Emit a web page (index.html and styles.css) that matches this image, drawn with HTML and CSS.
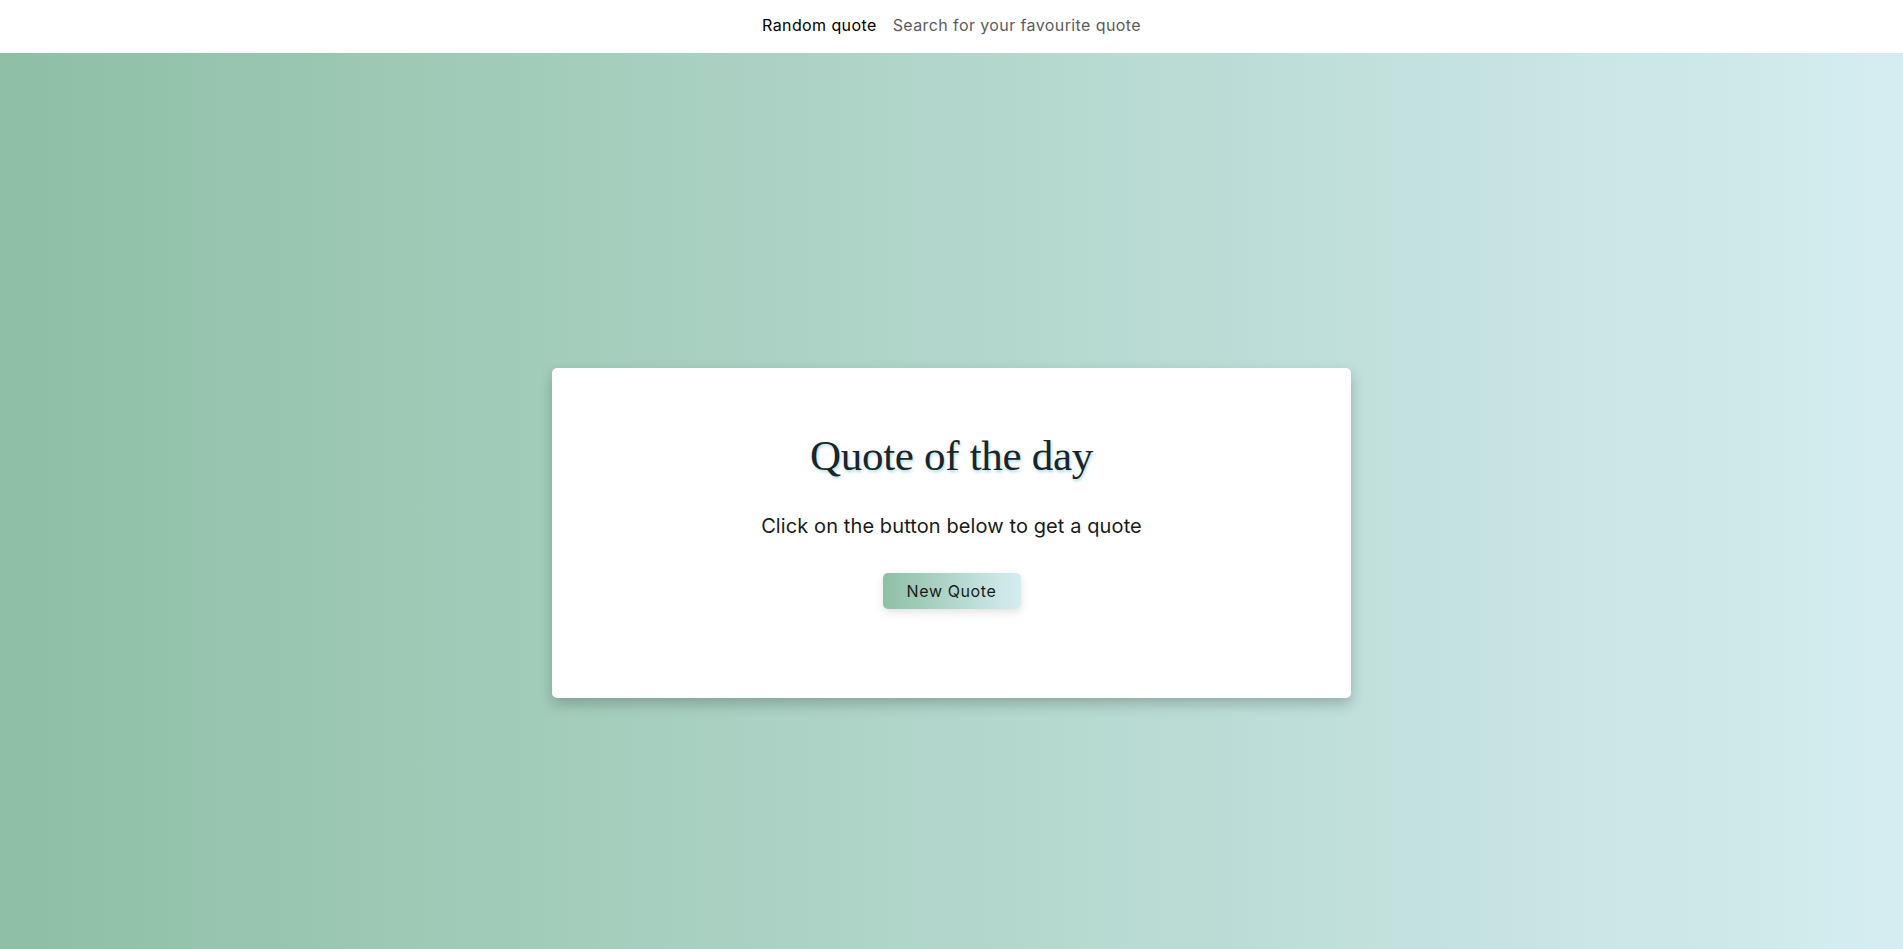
FILE: index.html
```html
<!DOCTYPE html>
<html lang="en">
<head>
<meta charset="utf-8">
<title>Random quote</title>
<link rel="stylesheet" href="styles.css">
</head>
<body>
<nav class="nav">
  <a class="nav-link active" href="#">Random quote</a>
  <a class="nav-link" href="#">Search for your favourite quote</a>
</nav>
<main class="main">
  <section class="card">
    <h1 class="title">Quote of the day</h1>
    <p class="subtitle">Click on the button below to get a quote</p>
    <button class="btn" type="button">New Quote</button>
  </section>
</main>
</body>
</html>
```

FILE: styles.css
```css
* { box-sizing: border-box; }
html, body { margin: 0; padding: 0; }
body {
  font-family: Inter, "Noto Sans", "Liberation Sans", sans-serif;
  color: #212529;
  background: linear-gradient(to right, #8ebfa5, #d5edf1);
  min-height: 100vh;
}
.nav {
  height: 53px;
  background: #fff;
  display: flex;
  justify-content: center;
  align-items: center;
  gap: 16px;
  padding-bottom: 4px;
}
.nav-link {
  text-decoration: none;
  font-size: 16px;
  letter-spacing: 0.4px;
  color: #5c5c5c;
}
.nav-link.active { color: #000; }
.main {
  display: flex;
  justify-content: center;
  padding-top: 315px;
  min-height: 896px;
}
.card {
  width: 799px;
  height: 330px;
  background: #fff;
  border-radius: 5px;
  box-shadow: 0 6px 14px rgba(0,0,0,0.22);
  display: flex;
  flex-direction: column;
  align-items: center;
  padding-top: 61px;
}
.title {
  margin: 0;
  font-family: "Liberation Serif", "Times New Roman", serif;
  font-weight: 400;
  font-size: 43px;
  line-height: 53px;
  letter-spacing: -0.3px;
  color: #1b2528;
  text-shadow: 1px 2px 3px rgba(150, 210, 220, 0.8);
}
.subtitle {
  margin: 30px 0 0;
  font-size: 20px;
  line-height: 28px;
  letter-spacing: 0.1px;
  color: #1a1a1a;
}
.btn {
  margin-top: 33px;
  width: 138px;
  height: 36px;
  border: none;
  border-radius: 5px;
  background: linear-gradient(to right, #8ebfa5, #d5edf1);
  font-family: Inter, "Noto Sans", sans-serif;
  font-size: 16px;
  letter-spacing: 0.6px;
  color: #1a1a1a;
  box-shadow: 0 3px 8px rgba(0,0,0,0.12);
  cursor: pointer;
}
```
